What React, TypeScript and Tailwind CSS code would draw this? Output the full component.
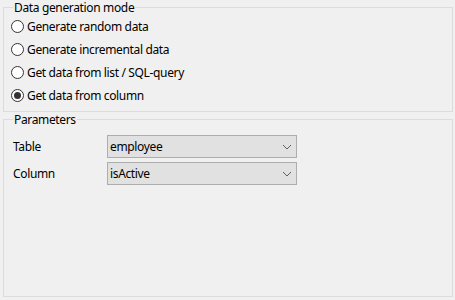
import { useState } from 'react';

const modes = [
  'Generate random data',
  'Generate incremental data',
  'Get data from list / SQL-query',
  'Get data from column',
];

function Radio({ checked }: { checked: boolean }) {
  return (
    <span className="flex h-[13px] w-[13px] shrink-0 items-center justify-center rounded-full border border-[#333333] bg-white">
      {checked && <span className="h-[7px] w-[7px] rounded-full bg-[#333333]" />}
    </span>
  );
}

function Combo({ value }: { value: string }) {
  return (
    <div className="flex h-[23px] w-[190px] items-center justify-between border border-[#adadad] bg-[#e1e1e1] pl-[2px] pr-[4px]">
      <span>{value}</span>
      <svg width="10" height="6" viewBox="0 0 10 6" className="text-[#606060]">
        <path d="M1 1 L5 5 L9 1" fill="none" stroke="currentColor" strokeWidth="1" />
      </svg>
    </div>
  );
}

export default function App() {
  const [mode, setMode] = useState(3);

  return (
    <div
      className="flex h-[300px] w-[455px] flex-col bg-[#f0f0f0] pb-[3px] pl-[3px] pr-[2px] text-[12px] tracking-[-0.35px] text-black"
      style={{ fontFamily: '"Noto Sans", sans-serif' }}
    >
      <fieldset className="border border-[#dcdcdc] pb-[4px]">
        <legend className="ml-[9px] px-[1px] leading-[15px]">Data generation mode</legend>
        {modes.map((label, i) => (
          <div
            key={label}
            onClick={() => setMode(i)}
            className="flex h-[23px] cursor-default items-center gap-[3px] pl-[7px]"
          >
            <Radio checked={mode === i} />
            <span>{label}</span>
          </div>
        ))}
      </fieldset>

      <fieldset className="flex-1 border border-[#dcdcdc]">
        <legend className="ml-[9px] px-[1px] leading-[15px]">Parameters</legend>
        <div className="flex flex-col gap-[4px] pt-[8px]">
          <div className="flex items-center">
            <span className="w-[103px] pl-[9px]">Table</span>
            <Combo value="employee" />
          </div>
          <div className="flex items-center">
            <span className="w-[103px] pl-[9px]">Column</span>
            <Combo value="isActive" />
          </div>
        </div>
      </fieldset>
    </div>
  );
}
